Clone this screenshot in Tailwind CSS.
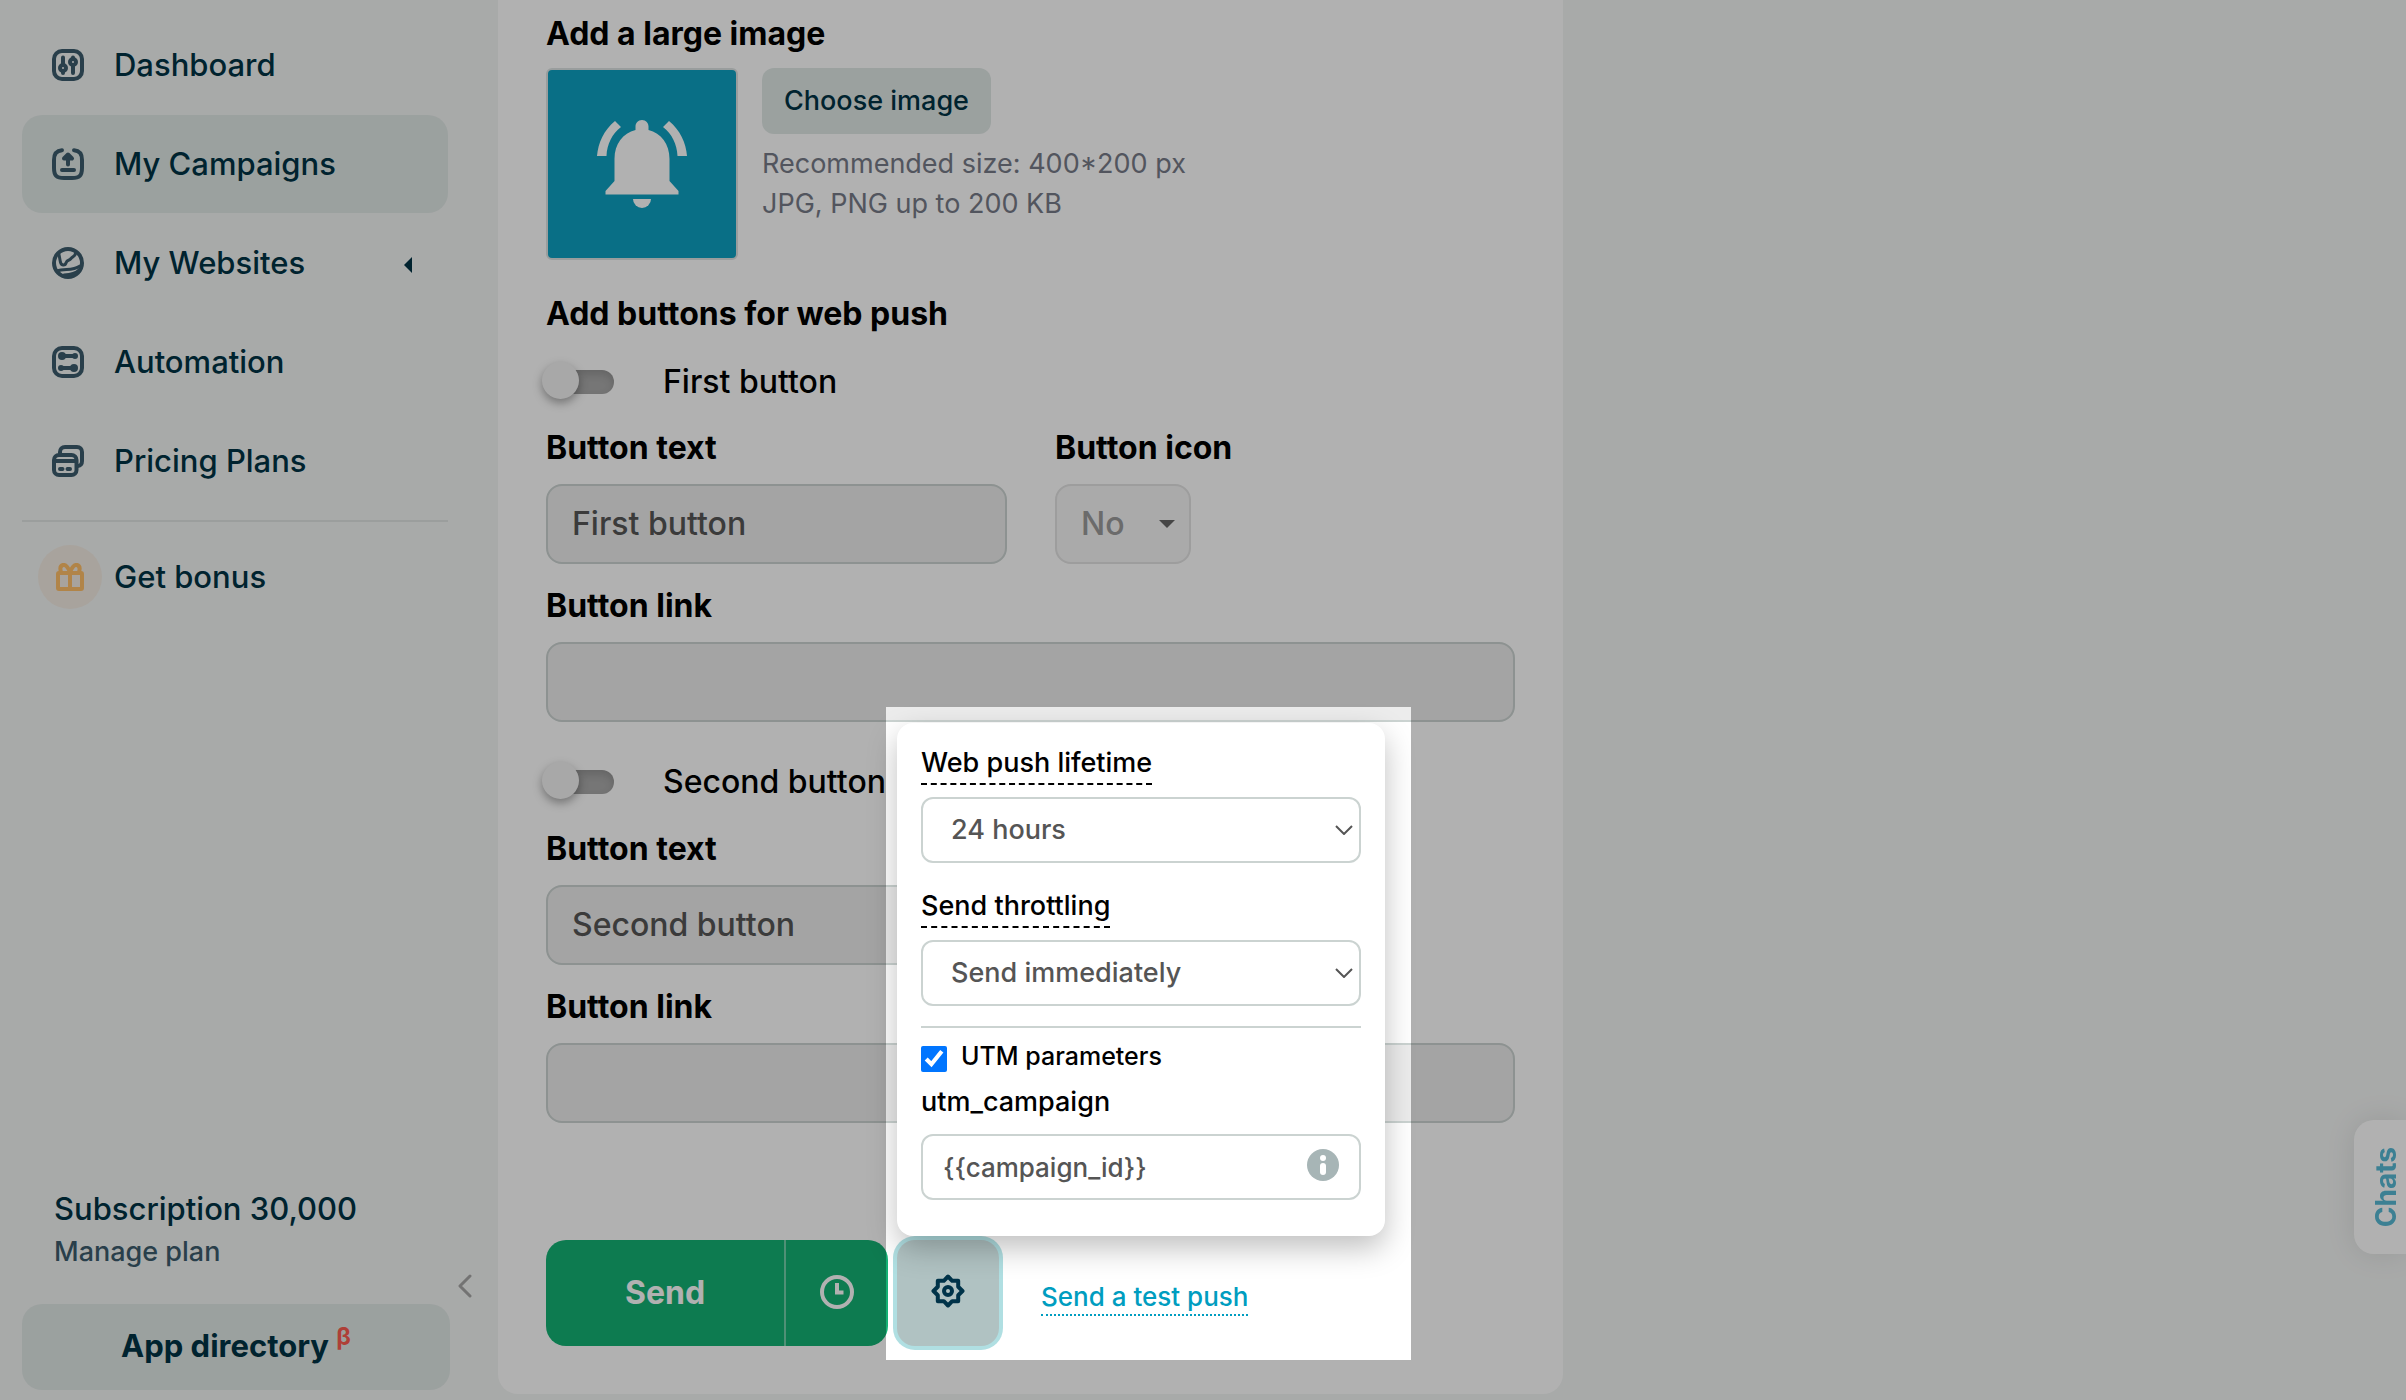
<!DOCTYPE html>
<html lang="en">
    <head>
        <meta charset="UTF-8" />
        <meta name="viewport" content="width=device-width, initial-scale=1.0" />
        <title>Create campaign</title>
        <script src="https://cdn.jsdelivr.net/npm/@tailwindcss/browser@4"></script>
    </head>
    <body class="overflow-x-hidden bg-[#f3f5f4] font-['Inter','Liberation_Sans',sans-serif] font-medium text-black">
        <div class="flex min-h-screen">
            <!-- sidebar -->
            <aside class="relative flex w-[498px] shrink-0 flex-col justify-between px-[22px] pt-4 pb-2.5 text-[#003344]">
                <nav class="text-[31px]">
                    <ul class="flex flex-col gap-px">
                        <li>
                            <a href="#" class="flex h-[98px] w-[426px] items-center gap-[30px] rounded-[20px] px-[30px]">
                                <svg class="size-8 text-[#3c5c6c]" viewBox="0 0 32 32" fill="none" stroke="currentColor" stroke-width="4" stroke-linecap="round">
                                    <rect x="2" y="2" width="28" height="28" rx="8" />
                                    <path d="M11 8.500v7M11 23v1M21 8.500v1M21 17v7" />
                                    <circle cx="11" cy="19" r="3" />
                                    <circle cx="21" cy="13" r="3" />
                                </svg>
                                Dashboard
                            </a>
                        </li>
                        <li>
                            <a href="#" class="flex h-[98px] w-[426px] items-center gap-[30px] rounded-[20px] bg-[#e0e8e6] px-[30px]">
                                <svg class="size-8 text-[#3c5c6c]" viewBox="0 0 32 32" fill="none" stroke="currentColor" stroke-width="4" stroke-linecap="round" stroke-linejoin="round">
                                    <path d="M10 2.300C4.500 2.800 2 5.500 2 12v8c0 7.500 2.500 10 10 10h8c7.500 0 10-2.500 10-10v-8c0-6.500-2.500-9.200-8-9.700" />
                                    <path d="M16 16.500V7M12 10.500l4-4 4 4zM10 22h12" />
                                </svg>
                                My Campaigns
                            </a>
                        </li>
                        <li>
                            <a href="#" class="flex h-[98px] w-[426px] items-center gap-[30px] rounded-[20px] pr-9 pl-[30px]">
                                <svg class="size-8 text-[#3c5c6c]" viewBox="0 0 32 32" fill="none" stroke="currentColor" stroke-width="3" stroke-linecap="round" stroke-linejoin="round">
                                    <circle cx="16" cy="16" r="14" stroke-width="4" />
                                    <path d="M7 7.500l1.200 6.500c.6 5 5 5 6 1.500 1-3 3-1.500 4.800-4 1.500-2.500 4.500-1.500 4.500-5.500" />
                                    <path d="M5 24c7.500-3 15 .5 23-5M12 28c6-.3 12-1.500 15-5" />
                                </svg>
                                My Websites
                                <svg class="mt-1 ml-auto h-4 w-2" viewBox="0 0 8 16" fill="currentColor">
                                    <path d="M8 0v16L0 8z" />
                                </svg>
                            </a>
                        </li>
                        <li>
                            <a href="#" class="flex h-[98px] w-[426px] items-center gap-[30px] rounded-[20px] px-[30px]">
                                <svg class="size-8 text-[#3c5c6c]" viewBox="0 0 32 32" fill="currentColor" stroke="currentColor" stroke-width="4">
                                    <rect x="2" y="2" width="28" height="28" rx="8" fill="none" />
                                    <path d="M10 10h13M9 22h13" />
                                    <g stroke="none">
                                        <circle cx="10" cy="10" r="4" />
                                        <circle cx="23" cy="10" r="3" />
                                        <circle cx="9" cy="22" r="3" />
                                        <circle cx="22" cy="22" r="4" />
                                    </g>
                                </svg>
                                Automation
                            </a>
                        </li>
                        <li>
                            <a href="#" class="flex h-[98px] w-[426px] items-center gap-[30px] rounded-[20px] px-[30px]">
                                <svg class="size-8 text-[#3c5c6c]" viewBox="0 0 32 32" fill="none" stroke="currentColor" stroke-width="4" stroke-linecap="round">
                                    <path d="M8 8V7c0-3 2-5 5-5h12c3 0 5 2 5 5v9c0 3-1.500 5-4 5" />
                                    <rect x="2" y="10" width="22.500" height="20" rx="5" />
                                    <path d="M3 16h20.500M8 24h3M15 24h3" stroke-linecap="butt" />
                                    <path d="M8 24h2.500M15.500 24H18" />
                                </svg>
                                Pricing Plans
                            </a>
                        </li>
                    </ul>
                    <hr class="mt-2.5 w-[426px] border-t-2 border-[#e0e4e3]" />
                    <a href="#" class="mt-[23px] ml-4 flex items-center gap-3">
                        <span class="flex size-16 items-center justify-center rounded-full bg-[#f3ebe2]">
                            <svg class="size-7 text-[#ffbf68]" viewBox="0 0 28 28" fill="none" stroke="currentColor" stroke-width="4" stroke-linejoin="round">
                                <rect x="2" y="10" width="24" height="16" rx="1" />
                                <path d="M14 9v17M14 9C11 2 9 1.500 7 2 4 3 4 6 5 9M14 9c3-7 5-7.500 7-7 3 1 3 4 2 7" />
                            </svg>
                        </span>
                        Get bonus
                    </a>
                </nav>
                <div>
                    <div class="ml-8">
                        <p class="text-[31px] leading-10">Subscription 30,000</p>
                        <a href="#" class="mt-[5px] block text-[27px] leading-9 text-[#3c5c6c]">Manage plan</a>
                    </div>
                    <button type="button" class="mt-[34px] block h-[86px] w-[428px] rounded-[20px] bg-[#e0e8e6] pb-0.5 text-[31px] font-bold">
                        App directory <sup class="text-2xl leading-none text-[#fb5c50]">β</sup>
                    </button>
                    <button type="button" aria-label="Collapse menu" class="absolute right-[26px] bottom-[102px]">
                        <svg class="h-6 w-3.5 text-[#a6a6a6]" viewBox="0 0 14 24" fill="none" stroke="currentColor" stroke-width="3" stroke-linecap="round" stroke-linejoin="round">
                            <path d="M12 2L2 12l10 10" />
                        </svg>
                    </button>
                </div>
            </aside>

            <!-- campaign form -->
            <main class="flex-1 pb-1.5">
                <form class="max-w-[1065px] rounded-b-[20px] bg-white px-12 pt-3.5 pb-12 text-[32px] leading-10">
                    <h2 class="font-bold">Add a large image</h2>
                    <div class="mt-3.5 flex gap-6">
                        <div class="flex size-48 items-center justify-center rounded-md border-2 border-[#dde3e2] bg-[#0ea1c1]">
                            <svg class="h-[90px] w-[92px]" viewBox="0 0 92 90" fill="#fff">
                                <path d="M1 37C2 24 8 11 19 2l6 6C16 15 11 25 10.500 37zM91 37C90 24 84 11 73 2l-6 6c9 7 14 17 14.500 29z" />
                                <path d="M46 1c-4 0-6.500 3-6.500 6.500V11C27 14 18.500 25 18.500 40v22l-9 10v3.500h73V72l-9-10V40c0-15-8.500-26-21-29V7.500C52.500 4 50 1 46 1z" />
                                <path d="M37 80h18a9 9 0 0 1-18 0z" />
                            </svg>
                        </div>
                        <div class="text-[27px] font-normal text-[#777b88]">
                            <button type="button" class="block h-[66px] rounded-xl bg-[#e0e8e6] px-[22px] font-medium text-[#003344]">Choose image</button>
                            <p class="mt-2.5">Recommended size: 400*200 px</p>
                            <p>JPG, PNG up to 200 KB</p>
                        </div>
                    </div>

                    <h2 class="mt-[34px] font-bold">Add buttons for web push</h2>

                    <div class="mt-7 flex items-center gap-[49px]">
                        <input
                            type="checkbox"
                            id="firstToggle"
                            class="relative h-6 w-[68px] appearance-none rounded-full bg-[#aaa] shadow-[inset_0_4px_8px_rgba(0,0,0,0.15)] before:absolute before:-top-2 before:-left-1 before:size-[37px] before:rounded-full before:bg-[#f3f3f3] before:shadow-[0_4px_10px_rgba(0,0,0,0.35)]"
                        />
                        <label for="firstToggle">First button</label>
                    </div>
                    <div class="mt-[26px] flex gap-12">
                        <div class="w-[461px]">
                            <label for="firstText" class="block font-bold">Button text</label>
                            <input
                                type="text"
                                id="firstText"
                                value="First button"
                                disabled
                                class="mt-4 block h-20 w-full rounded-2xl border-2 border-[#cbd3d1] bg-[#ececec] px-6 pb-0.5 text-[#555]"
                            />
                        </div>
                        <div>
                            <label for="firstIcon" class="block font-bold">Button icon</label>
                            <div class="relative mt-4 w-[136px]">
                                <select
                                    id="firstIcon"
                                    disabled
                                    class="block h-20 w-full appearance-none rounded-2xl border-2 border-[#e2e2e2] bg-[#f5f5f5] px-6 text-[#9a9a9a] opacity-100"
                                >
                                    <option>No</option>
                                </select>
                                <svg class="pointer-events-none absolute top-9 right-4 h-2 w-4" viewBox="0 0 16 8" fill="#666">
                                    <path d="M0 0h16L8 8z" />
                                </svg>
                            </div>
                        </div>
                    </div>
                    <label for="firstLink" class="mt-[22px] block font-bold">Button link</label>
                    <input
                        type="text"
                        id="firstLink"
                        disabled
                        class="mt-4 block h-20 w-full rounded-2xl border-2 border-[#cbd3d1] bg-[#ececec] px-6"
                    />

                    <div class="mt-10 flex items-center gap-[49px]">
                        <input
                            type="checkbox"
                            id="secondToggle"
                            class="relative h-6 w-[68px] appearance-none rounded-full bg-[#aaa] shadow-[inset_0_4px_8px_rgba(0,0,0,0.15)] before:absolute before:-top-2 before:-left-1 before:size-[37px] before:rounded-full before:bg-[#f3f3f3] before:shadow-[0_4px_10px_rgba(0,0,0,0.35)]"
                        />
                        <label for="secondToggle">Second button</label>
                    </div>
                    <label for="secondText" class="mt-[27px] block font-bold">Button text</label>
                    <input
                        type="text"
                        id="secondText"
                        value="Second button"
                        disabled
                        class="mt-4 block h-20 w-[461px] rounded-2xl border-2 border-[#cbd3d1] bg-[#ececec] px-6 pb-0.5 text-[#555]"
                    />
                    <label for="secondLink" class="mt-[22px] block font-bold">Button link</label>
                    <input
                        type="text"
                        id="secondLink"
                        disabled
                        class="mt-4 block h-20 w-full rounded-2xl border-2 border-[#cbd3d1] bg-[#ececec] px-6"
                    />

                    <div class="mt-[117px] flex items-center">
                        <div class="flex h-[106px] overflow-hidden rounded-[20px] bg-[#14b174] text-white">
                            <button type="submit" class="w-[238px] font-bold">Send</button>
                            <button type="button" aria-label="Schedule" class="flex w-[104px] items-center justify-center border-l-2 border-white/40">
                                <svg class="mb-0.5 size-[34px]" viewBox="0 0 34 34" fill="none" stroke="currentColor" stroke-width="4">
                                    <circle cx="17" cy="17" r="15" />
                                    <path d="M17 8v9.500h6.500" />
                                </svg>
                            </button>
                        </div>
                        <div class="relative ml-[9px] text-[27px]">
                            <button type="button" aria-label="Sending settings" class="flex h-[106px] w-[102px] items-center justify-center rounded-[18px] bg-[#b0c2c2] text-[#003349] ring-4 ring-[#b0dfe2]">
                                <svg class="mb-1 size-[34px]" viewBox="0 0 34 34" fill="none" stroke="currentColor" stroke-width="4" stroke-linejoin="round">
                                    <path d="M17 2.500l4.200 4.300h6v6l4.300 4.200-4.300 4.200v6h-6L17 31.500l-4.200-4.300h-6v-6L2.500 17l4.300-4.200v-6h6z" />
                                    <circle cx="17" cy="17" r="4" />
                                </svg>
                            </button>

                            <!-- settings popup -->
                            <div class="absolute bottom-full left-0 z-20 mb-1 w-[488px] rounded-2xl bg-white px-6 pt-[22px] pb-9 leading-9 shadow-[0_12px_30px_rgba(0,0,0,0.25)]">
                                <label for="lifetime" class="block w-fit border-b-2 border-dashed border-black pb-0.5">Web push lifetime</label>
                                <div class="relative mt-3">
                                    <select id="lifetime" class="block h-[66px] w-full appearance-none rounded-xl border-2 border-[#cbd3d1] bg-white pl-7 text-[#555]">
                                        <option>24 hours</option>
                                    </select>
                                    <svg class="pointer-events-none absolute top-7 right-2 h-2.5 w-[18px]" viewBox="0 0 18 10" fill="none" stroke="#555" stroke-width="2">
                                        <path d="M1 1l8 8 8-8" />
                                    </svg>
                                </div>
                                <label for="throttling" class="mt-[25px] block w-fit border-b-2 border-dashed border-black pb-0.5">Send throttling</label>
                                <div class="relative mt-3">
                                    <select id="throttling" class="block h-[66px] w-full appearance-none rounded-xl border-2 border-[#cbd3d1] bg-white pl-7 text-[#555]">
                                        <option>Send immediately</option>
                                    </select>
                                    <svg class="pointer-events-none absolute top-7 right-2 h-2.5 w-[18px]" viewBox="0 0 18 10" fill="none" stroke="#555" stroke-width="2">
                                        <path d="M1 1l8 8 8-8" />
                                    </svg>
                                </div>
                                <hr class="mt-5 border-t-2 border-[#cbd3d1]" />
                                <div class="mt-2.5 flex gap-3.5">
                                    <input type="checkbox" id="utm" checked class="mt-2 size-[26px] accent-[#0075ff]" />
                                    <label for="utm" class="text-[25px]">UTM parameters</label>
                                </div>
                                <label for="utmCampaign" class="mt-2.5 block">utm_campaign</label>
                                <div class="relative mt-3.5">
                                    <input
                                        type="text"
                                        id="utmCampaign"
                                        value="{{campaign_id}}"
                                        class="block h-[66px] w-full rounded-xl border-2 border-[#cbd3d1] bg-white pr-16 pl-5 text-[26px] text-[#555]"
                                    />
                                    <svg class="absolute top-[15px] right-[22px] size-8" viewBox="0 0 32 32">
                                        <circle cx="16" cy="16" r="16" fill="#a7b5b6" />
                                        <circle cx="16" cy="9" r="3" fill="#fff" />
                                        <rect x="13" y="14" width="6" height="12" rx="3" fill="#fff" />
                                    </svg>
                                </div>
                            </div>

                            <!-- spotlight, dims everything around it -->
                            <div class="pointer-events-none absolute -bottom-3.5 -left-[11px] z-50 h-[653px] w-[525px] shadow-[0_0_0_3000px_rgba(0,0,0,0.305)]"></div>
                        </div>
                        <a href="#" class="mt-2.5 ml-[42px] border-b-2 border-dotted border-[#009dc0] text-[26px] leading-[34px] text-[#009dc0]">Send a test push</a>
                    </div>
                </form>
            </main>
        </div>

        <button
            type="button"
            class="fixed top-[1120px] right-0 z-10 flex h-[134px] w-[52px] items-center justify-center rounded-l-[20px] bg-white pl-3 text-[28px] font-bold text-[#57b9d4] shadow-[0_0_30px_rgba(0,0,0,0.1)]"
        >
            <span class="rotate-180 [writing-mode:vertical-rl]">Chats</span>
        </button>
    </body>
</html>
